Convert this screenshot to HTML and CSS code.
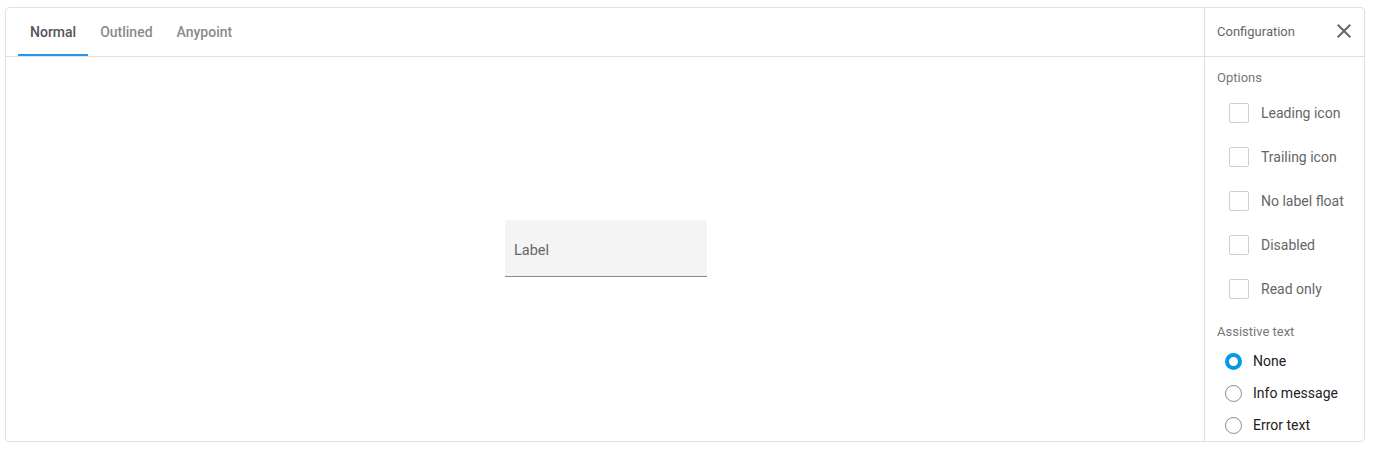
FILE: index.html
```html
<!DOCTYPE html>
<html>
<head>
<meta charset="utf-8">
<link rel="stylesheet" href="styles.css">
</head>
<body>
<div class="demo">
  <div class="main">
    <div class="tabs">
      <div class="tab active">Normal</div>
      <div class="tab">Outlined</div>
      <div class="tab">Anypoint</div>
    </div>
    <div class="stage">
      <div class="field"><span class="field-label">Label</span></div>
    </div>
  </div>
  <aside class="config">
    <div class="config-head">
      <span class="config-title">Configuration</span>
      <svg class="close" width="24" height="24" viewBox="0 0 24 24"><path d="M19 6.41L17.59 5 12 10.59 6.41 5 5 6.41 10.59 12 5 17.59 6.41 19 12 13.41 17.59 19 19 17.59 13.41 12z" fill="#666"/></svg>
    </div>
    <div class="config-body">
      <div class="section-title">Options</div>
      <div class="check-row"><span class="box"></span><span class="check-label">Leading icon</span></div>
      <div class="check-row"><span class="box"></span><span class="check-label">Trailing icon</span></div>
      <div class="check-row"><span class="box"></span><span class="check-label">No label float</span></div>
      <div class="check-row"><span class="box"></span><span class="check-label">Disabled</span></div>
      <div class="check-row"><span class="box"></span><span class="check-label">Read only</span></div>
      <div class="section-title second">Assistive text</div>
      <div class="radio-row"><span class="radio on"></span><span class="radio-label">None</span></div>
      <div class="radio-row"><span class="radio"></span><span class="radio-label">Info message</span></div>
      <div class="radio-row"><span class="radio"></span><span class="radio-label">Error text</span></div>
    </div>
  </aside>
</div>
</body>
</html>
```
FILE: styles.css
```css
* { box-sizing: border-box; }
html, body { margin: 0; padding: 0; background: #fff; }
body { font-family: Roboto, "Noto Sans", sans-serif; }

.demo {
  margin: 7px 0 0 5px;
  width: 1360px;
  height: 435px;
  border: 1px solid #e0e0e0;
  border-radius: 4px;
  display: flex;
  overflow: hidden;
}

.main { flex: 1; display: flex; flex-direction: column; min-width: 0; }

.tabs {
  height: 49px;
  flex: none;
  border-bottom: 1px solid #e0e0e0;
  display: flex;
  padding-left: 12px;
}
.tab {
  padding: 0 12px;
  height: 48px;
  line-height: 48px;
  font-size: 14px;
  font-weight: 500;
  color: #8a8a8a;
  border-bottom: 2px solid transparent;
}
.tab.active { color: #555; border-bottom-color: #2196f3; }

.stage {
  flex: 1;
  display: flex;
  align-items: center;
  justify-content: center;
  padding: 0 0 2px 2px;
}
.field {
  width: 202px;
  height: 57px;
  background: #f4f4f4;
  border-bottom: 1px solid #8a8a8a;
  border-radius: 4px 4px 0 0;
  display: flex;
  align-items: center;
  padding-left: 9px;
  padding-top: 5px;
}
.field-label { font-size: 14.5px; color: #666; }

.config {
  width: 160px;
  flex: none;
  border-left: 1px solid #e0e0e0;
  display: flex;
  flex-direction: column;
}
.config-head {
  height: 49px;
  flex: none;
  border-bottom: 1px solid #e0e0e0;
  display: flex;
  align-items: center;
  justify-content: space-between;
  padding: 0 8px 2px 12px;
}
.config-title { font-size: 13px; color: #666; }
.close { display: block; }

.config-body { flex: none; padding: 13px 0 0 12px; }
.section-title { font-size: 13px; color: #777; height: 16px; line-height: 16px; margin-bottom: 5px; }
.section-title.second { margin-top: 13px; margin-bottom: 5px; }

.check-row {
  height: 44px;
  display: flex;
  align-items: center;
  padding-left: 12px;
}
.box {
  width: 20px;
  height: 20px;
  border: 1px solid #cfcfcf;
  border-radius: 2px;
  margin-right: 12px;
  flex: none;
}
.check-label { font-size: 14px; color: #666; white-space: nowrap; }

.radio-row {
  height: 32px;
  display: flex;
  align-items: center;
  padding-left: 8px;
}
.radio {
  width: 17px;
  height: 17px;
  border: 1px solid #8a8a8a;
  border-radius: 50%;
  margin-right: 11px;
  flex: none;
}
.radio.on { border: 4.5px solid #039be5; }
.radio-label { font-size: 14px; color: #222; white-space: nowrap; }
```
